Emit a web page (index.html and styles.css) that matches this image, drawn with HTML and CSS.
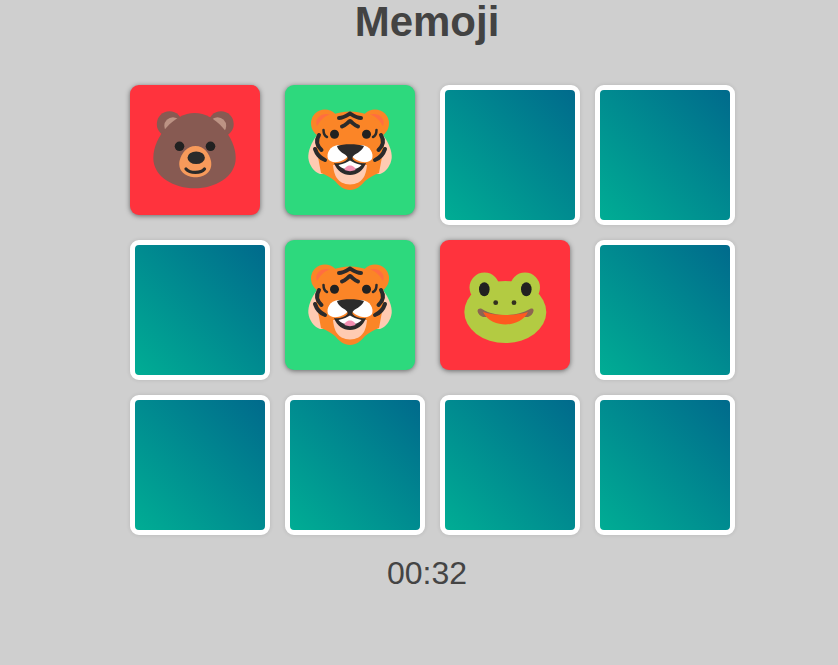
FILE: index.html
```html
<!DOCTYPE html>
<html lang="en">
<head>
<meta charset="utf-8">
<title>Memoji</title>
<link rel="stylesheet" href="styles.css">
</head>
<body>
<svg class="defs" width="0" height="0" aria-hidden="true">
  <defs>
    <symbol id="bear" viewBox="0 0 130 130">
      <circle cx="39.500" cy="39" r="12.700" fill="#875a52"/>
      <circle cx="91" cy="39" r="12.700" fill="#875a52"/>
      <circle cx="43" cy="41" r="8.700" fill="#bc9384"/>
      <circle cx="87.500" cy="41" r="8.700" fill="#bc9384"/>
      <path d="M64.700 28 C85 28 105.700 52 105.700 73 C105.700 92 85 103.300 64.700 103.300 C44 103.300 23.300 92 23.300 73 C23.300 52 44 28 64.700 28 Z" fill="#875a52"/>
      <circle cx="49.500" cy="61.300" r="4.800" fill="#212121"/>
      <circle cx="80.500" cy="61.300" r="4.800" fill="#212121"/>
      <path d="M65.500 61 C74 61 79 68 81 76 C83 87 74 92.300 65.500 92.300 C57 92.300 47.500 87 49.500 76 C51.500 68 57 61 65.500 61 Z" fill="#f79a5b"/>
      <ellipse cx="66.200" cy="72.700" rx="8.700" ry="6.300" fill="#2b2b2b"/>
      <path d="M56 84 C60 88.500 71 88.500 74.500 84" fill="none" stroke="#2b2b2b" stroke-width="3.200" stroke-linecap="round"/>
    </symbol>
    <symbol id="tiger" viewBox="0 0 130 130">
      <path d="M32 50 C26 58 23 66 23.300 73 C24 80 29 87 35 89 L95 89 C101 87 106 80 106.700 73 C107 66 104 58 98 50 Z" fill="#ffcbb2"/>
      <circle cx="40" cy="38.500" r="14" fill="#fb8527"/>
      <circle cx="90" cy="38.500" r="14" fill="#fb8527"/>
      <path d="M65 26.500 C78 26.500 90 31 96 44 C100 52 100 62 97 72 C96 77 95 83 94 88 C88 90 84 93 80 96 C76 101 71 105 65 105 C59 105 54 101 50 96 C46 93 42 90 36 88 C35 83 34 77 33 72 C30 62 30 52 34 44 C40 31 52 26.500 65 26.500 Z" fill="#fb8527"/>
      <path d="M32 41 C29 34 36 27 45 29.500 C39 31 35 36 32 41 Z" fill="#ff6e40"/>
      <path d="M98 41 C101 34 94 27 85 29.500 C91 31 95 36 98 41 Z" fill="#ff6e40"/>
      <path d="M48 80 C49 90 52 99 65 99.500 C78 99 81 90 82 80 Z" fill="#ffcbb2"/>
      <g class="stripes">
        <path d="M54 33 C58 33 61 31 65 28.500 C69 31 72 33 76 33"/>
        <path d="M57 41.500 C60 41 62 38 65 36 C68 38 70 41 73 41.500"/>
        <path d="M34 50 C31 55 31 60 36.500 65"/>
        <path d="M96 50 C99 55 99 60 93.500 65"/>
        <path d="M30 64 C32 70 35 73 40 75"/>
        <path d="M100 64 C98 70 95 73 90 75"/>
      </g>
      <g class="stripes-thin">
        <path d="M38.500 45 C38.500 48 39.500 51 42 52"/>
        <path d="M91.500 45 C91.500 48 90.500 51 88 52"/>
      </g>
      <circle cx="49.500" cy="49.300" r="4.500" fill="#212121"/>
      <circle cx="81.500" cy="49.300" r="4.500" fill="#212121"/>
      <path d="M53 60 C45 61 41 68 43 74 C46 79 58 78 63 71 C64 66 60 60 53 60 Z" fill="#fff"/>
      <path d="M77 60 C85 61 89 68 87 74 C84 79 72 78 67 71 C66 66 70 60 77 60 Z" fill="#fff"/>
      <path d="M52 61 C58 58.500 72 58.500 79 61 C77 67 69 69 67.500 72 L67.500 74 C71 78 77 79 81 78 C78 86 72 90 65 90 C58 90 52 86 49 78 C53 79 59 78 62.500 74 L62.500 72 C61 69 53 67 52 61 Z" fill="#2b2b2b"/>
      <path d="M53.500 80 C59 78.500 62 77.500 65 75.500 C68 77.500 71 78.500 76.500 80 C72 86 58 86 53.500 80 Z" fill="#fff"/>
      <path d="M59.500 85 C60 79 70 79 70.500 85 C67 86.500 63 86.500 59.500 85 Z" fill="#f48fb1"/>
    </symbol>
    <symbol id="frog" viewBox="0 0 130 130">
      <circle cx="44.500" cy="47.500" r="15" fill="#b3cb42"/>
      <circle cx="85" cy="47.500" r="15" fill="#b3cb42"/>
      <ellipse cx="65.300" cy="72" rx="41" ry="31" fill="#b3cb42"/>
      <ellipse cx="44.300" cy="49.300" rx="5.300" ry="7" fill="#212121"/>
      <ellipse cx="86.300" cy="49.300" rx="5.300" ry="7" fill="#212121"/>
      <circle cx="55.700" cy="62.700" r="2.400" fill="#33301f"/>
      <circle cx="74" cy="62.700" r="2.400" fill="#33301f"/>
      <path d="M37.500 71 C38 68.500 40 68 42 69 C55 77 76 77 90 69 C92 68 94 69 93.500 71 C93 74 91 76 88 77 L43 77 C40 76 38 74 37.500 71 Z" fill="#8d6451"/>
      <path d="M43 72 C55 76 76 76 88 72 C84 81 73 84.500 65.500 84.500 C58 84.500 47 81 43 72 Z" fill="#fe5a1f"/>
    </symbol>
  </defs>
</svg>
<main class="game">
  <h1 class="title">Memoji</h1>
  <div class="board">
    <div class="card card-wrong"><svg class="emoji"><use href="#bear"/></svg></div>
    <div class="card card-match"><svg class="emoji"><use href="#tiger"/></svg></div>
    <div class="card card-back"></div>
    <div class="card card-back"></div>
    <div class="card card-back"></div>
    <div class="card card-match"><svg class="emoji"><use href="#tiger"/></svg></div>
    <div class="card card-wrong"><svg class="emoji"><use href="#frog"/></svg></div>
    <div class="card card-back"></div>
    <div class="card card-back"></div>
    <div class="card card-back"></div>
    <div class="card card-back"></div>
    <div class="card card-back"></div>
  </div>
  <p class="timer">00:32</p>
</main>
</body>
</html>
```
FILE: styles.css
```css
html, body {
  margin: 0;
  height: 100%;
  overflow: hidden;
}
body {
  background: #cfcfcf;
  font-family: "Liberation Sans", Arial, sans-serif;
}
.defs {
  display: block;
  height: 0;
}
.game {
  padding-left: 16px;
  display: flex;
  flex-direction: column;
  align-items: center;
}
.title {
  margin: 0 0 42px;
  font-size: 42px;
  line-height: 43px;
  font-weight: 700;
  color: #434343;
  text-align: center;
}
.board {
  display: grid;
  grid-template-columns: repeat(4, 140px);
  grid-template-rows: repeat(3, 140px);
  gap: 15px;
  margin-left: 11px;
}
.card {
  box-sizing: border-box;
  border-radius: 9px;
}
.card-wrong,
.card-match {
  width: 130px;
  height: 130px;
  box-shadow: 0 1px 5px rgba(0, 0, 0, 0.5);
}
.card-wrong {
  background: #ff333d;
}
.card-match {
  background: #2dd97d;
}
.card-back {
  width: 140px;
  height: 140px;
  border: 5px solid #fff;
  background: linear-gradient(45deg, #00ad94, #006a8c);
  box-shadow: 0 0 4px rgba(0, 0, 0, 0.12);
}
.emoji {
  display: block;
  width: 130px;
  height: 130px;
}
.stripes,
.stripes-thin {
  fill: none;
  stroke: #2b2b2b;
  stroke-linecap: round;
  stroke-linejoin: round;
}
.stripes {
  stroke-width: 4px;
}
.stripes-thin {
  stroke-width: 2.500px;
}
.timer {
  margin: 20px 0 0;
  font-size: 32px;
  line-height: 37px;
  color: #444;
  text-align: center;
}
```
